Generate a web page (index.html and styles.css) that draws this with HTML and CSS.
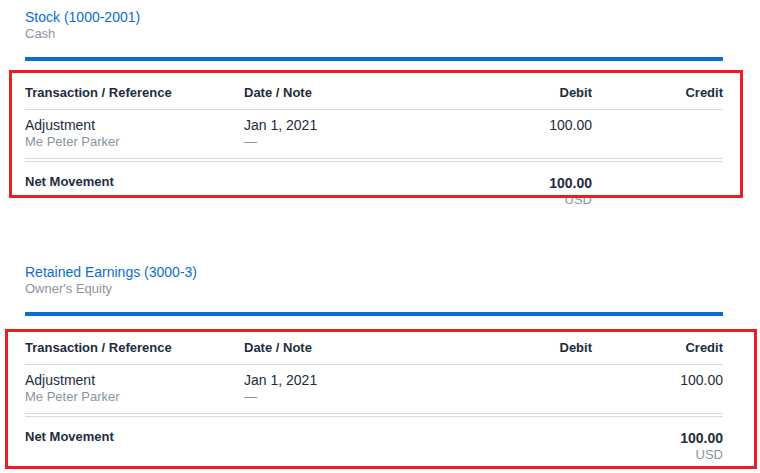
FILE: index.html
```html
<!DOCTYPE html>
<html lang="en">
<head>
<meta charset="utf-8">
<title>Ledger</title>
<link rel="stylesheet" href="styles.css">
</head>
<body>
<div class="page">
  <section class="account">
    <a class="acct-name">Stock (1000-2001)</a>
    <div class="acct-type">Cash</div>
    <div class="acct-bar"></div>
    <div class="ledger">
      <div class="mark mark-a"></div>
      <div class="grid head">
        <div>Transaction / Reference</div>
        <div>Date / Note</div>
        <div class="num">Debit</div>
        <div class="num">Credit</div>
      </div>
      <div class="grid row">
        <div><div class="main">Adjustment</div><div class="sub">Me Peter Parker</div></div>
        <div><div class="main">Jan 1, 2021</div><div class="sub">—</div></div>
        <div class="num"><div class="main">100.00</div></div>
        <div class="num"></div>
      </div>
      <div class="grid foot">
        <div class="label">Net Movement</div>
        <div></div>
        <div class="num"><div class="total">100.00</div><div class="sub">USD</div></div>
        <div class="num"></div>
      </div>
    </div>
  </section>

  <section class="account">
    <a class="acct-name">Retained Earnings (3000-3)</a>
    <div class="acct-type">Owner's Equity</div>
    <div class="acct-bar"></div>
    <div class="ledger">
      <div class="mark mark-b"></div>
      <div class="grid head">
        <div>Transaction / Reference</div>
        <div>Date / Note</div>
        <div class="num">Debit</div>
        <div class="num">Credit</div>
      </div>
      <div class="grid row">
        <div><div class="main">Adjustment</div><div class="sub">Me Peter Parker</div></div>
        <div><div class="main">Jan 1, 2021</div><div class="sub">—</div></div>
        <div class="num"></div>
        <div class="num"><div class="main">100.00</div></div>
      </div>
      <div class="grid foot">
        <div class="label">Net Movement</div>
        <div></div>
        <div class="num"></div>
        <div class="num"><div class="total">100.00</div><div class="sub">USD</div></div>
      </div>
    </div>
  </section>
</div>
</body>
</html>
```

FILE: styles.css
```css
html, body {
  margin: 0;
  padding: 0;
  background: #ffffff;
}

body {
  font-family: "Liberation Sans", Arial, sans-serif;
  color: #1d2d3e;
  width: 760px;
  height: 473px;
  overflow: hidden;
}

.page {
  padding: 8px 37px 0 25px;
  display: flex;
  flex-direction: column;
  gap: 55px;
}

.account {
  display: flex;
  flex-direction: column;
}

.acct-name {
  display: block;
  font-size: 14px;
  line-height: 18px;
  color: #0a6ed1;
}

.acct-type {
  font-size: 13px;
  line-height: 16px;
  color: #8a949e;
}

.acct-bar {
  margin-top: 15px;
  height: 4px;
  background: #0a6ed1;
}

.ledger {
  position: relative;
}

.grid {
  display: grid;
  grid-template-columns: 219px 1fr 130px 131px;
}

.num {
  text-align: right;
}

.head {
  padding: 24px 0 8px;
  font-size: 13px;
  line-height: 16px;
  font-weight: bold;
  border-bottom: 1px solid #d5dadf;
}

.row {
  padding: 6px 0 8px;
  border-bottom: 1px solid #d5dadf;
}

.main {
  font-size: 14px;
  line-height: 18px;
}

.sub {
  font-size: 13px;
  line-height: 16px;
  color: #8a949e;
}

.foot {
  margin-top: 2px;
  padding-top: 12px;
  border-top: 1px solid #d5dadf;
}

.label {
  font-size: 13px;
  line-height: 16px;
  font-weight: bold;
}

.total {
  font-size: 14px;
  line-height: 18px;
  font-weight: bold;
}

.mark {
  position: absolute;
  border: 3px solid #ec1c24;
  pointer-events: none;
}

.mark-a {
  top: 9px;
  left: -16px;
  right: -20px;
  bottom: 10px;
}

.mark-b {
  top: 13px;
  left: -20px;
  right: -34px;
  bottom: -6px;
}
```
